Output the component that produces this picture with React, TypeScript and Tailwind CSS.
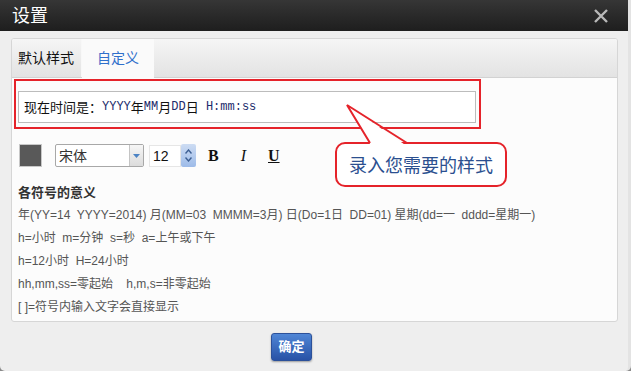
import React from "react";

const lines = [
  "年(YY=14  YYYY=2014) 月(MM=03  MMMM=3月) 日(Do=1日  DD=01) 星期(dd=一  dddd=星期一)",
  "h=小时  m=分钟  s=秒  a=上午或下午",
  "h=12小时  H=24小时",
  "hh,mm,ss=零起始    h,m,s=非零起始",
  "[ ]=符号内输入文字会直接显示",
];

function Mono({ children }: { children: React.ReactNode }) {
  return (
    <span className="font-['Liberation_Mono',monospace] text-[12px] text-[#1b2a6b]">
      {children}
    </span>
  );
}

export default function App() {
  return (
    <div className="relative w-[631px] h-[371px] overflow-hidden bg-[#8a8a8a] font-['Liberation_Sans','Noto_Sans_CJK_SC',sans-serif]">
      <div className="w-[631px] h-[371px] bg-[#eeeeee] rounded-b-[5px] border-r-[3px] border-[#e3e3e3] flex flex-col">
        {/* Title bar */}
        <div className="h-[31px] shrink-0 bg-gradient-to-b from-[#363636] to-[#1e1e1e] flex items-center justify-between pl-[12px] pr-[20px]">
          <span className="text-[18px] leading-none text-white">设置</span>
          <svg width="14" height="14" viewBox="0 0 14 14">
            <path d="M1 1 L13 13 M13 1 L1 13" stroke="#b8b8b8" strokeWidth="2.4" />
          </svg>
        </div>

        {/* Panel */}
        <div className="pt-[7px] pl-[11px]">
          <div className="w-[607px] h-[284px] border border-[#d6d6d6] rounded-[3px] bg-[#fcfcfc] overflow-hidden">
            {/* Tabs */}
            <div className="h-[39px] flex bg-gradient-to-b from-[#f5f5f5] to-[#e3e3e3] border-b border-[#d2d2d2]">
              <div className="w-[70px] flex items-center pl-[6px] border-r border-[#f8f8f8] text-[14px] text-[#111]">
                默认样式
              </div>
              <div className="w-[72px] h-[39px] bg-[#fafafa] flex items-center pl-[15px] text-[14px] text-[#2f6fcb]">
                自定义
              </div>
            </div>

            {/* Format input */}
            <div className="ml-[2px] mt-[1px] w-[467px] h-[50px] border-2 border-[#e5232a] pl-[2px] pt-[10px]">
              <div className="w-[458px] h-[32px] border border-[#bcbcbc] bg-white flex items-center pl-[5px] text-[13px] text-[#111] font-['Noto_Sans_CJK_SC',sans-serif] whitespace-pre">
                <span>现在时间是：</span>
                <Mono>YYYY</Mono>
                <span>年</span>
                <Mono>MM</Mono>
                <span>月</span>
                <Mono>DD</Mono>
                <span>日</span>
                <Mono> H:mm:ss</Mono>
              </div>
            </div>

            {/* Toolbar */}
            <div className="mt-[15px] h-[23px] pl-[7px] flex items-center">
              <div className="w-[23px] h-[23px] bg-[#595959] border border-[#c8c8c8]" />
              <div className="ml-[13px] w-[89px] h-[23px] border border-[#a8a8a8] rounded-[2px] bg-white flex">
                <span className="flex-1 pl-[3px] text-[14px] leading-[21px] text-[#333] font-['Noto_Sans_CJK_SC',sans-serif]">
                  宋体
                </span>
                <div className="w-[14px] h-[21px] border-l border-[#c4c4c4] bg-gradient-to-b from-[#f6f6f6] to-[#dcdcdc] flex items-center justify-center">
                  <svg width="7" height="4" viewBox="0 0 7 4">
                    <path d="M0 0 H7 L3.5 4 Z" fill="#4c83c4" />
                  </svg>
                </div>
              </div>
              <div className="ml-[5px] w-[32px] h-[22px] border border-[#e6e6e6] bg-white pl-[3px] text-[14px] leading-[20px] text-[#111]">
                12
              </div>
              <div className="w-[15px] h-[23px] rounded-[2px] bg-gradient-to-b from-[#cddcf3] to-[#9dbbe8] flex flex-col items-center justify-center gap-[3px]">
                <svg width="7" height="5" viewBox="0 0 7 5">
                  <path d="M0.5 4.5 L3.5 1 L6.5 4.5" stroke="#3d5f93" strokeWidth="1.4" fill="none" />
                </svg>
                <svg width="7" height="5" viewBox="0 0 7 5">
                  <path d="M0.5 0.5 L3.5 4 L6.5 0.5" stroke="#3d5f93" strokeWidth="1.4" fill="none" />
                </svg>
              </div>
              <span className="ml-[12px] font-['Liberation_Serif',serif] font-bold text-[16px] text-[#111]">B</span>
              <span className="ml-[22px] font-['Liberation_Serif',serif] italic text-[16px] text-[#111]">I</span>
              <span className="ml-[22px] font-['Liberation_Serif',serif] font-bold text-[16px] underline text-[#111]">U</span>
            </div>

            {/* Legend */}
            <div className="mt-[14px] pl-[6px] leading-[23px]">
              <div className="text-[13px] font-bold text-[#333]">各符号的意义</div>
              {lines.map((l) => (
                <div key={l} className="text-[12px] text-[#555] whitespace-pre">
                  {l}
                </div>
              ))}
            </div>
          </div>
        </div>

        {/* Footer button */}
        <div className="mt-[11px] pl-[271px]">
          <button className="w-[41px] h-[28px] rounded-[3px] border border-[#2c519a] bg-gradient-to-b from-[#4f86d6] to-[#2952a6] text-white text-[13px] font-bold shadow-[0_1px_2px_rgba(0,0,0,0.35)]">
            确定
          </button>
        </div>
      </div>

      {/* Callout annotation */}
      <div className="absolute left-[335px] top-[142px] w-[172px] h-[45px] rounded-[10px] border-2 border-[#e5232a] bg-white flex items-center justify-center text-[18px] text-[#2b4f8f] font-['Noto_Sans_CJK_SC',sans-serif]">
        录入您需要的样式
      </div>
      <svg className="absolute left-0 top-0" width="631" height="371">
        <polygon points="371,145.5 347,105 406,145.5" fill="white" />
        <polyline points="370,143 347,105 407,143" fill="none" stroke="#e5232a" strokeWidth="2" />
      </svg>
    </div>
  );
}
